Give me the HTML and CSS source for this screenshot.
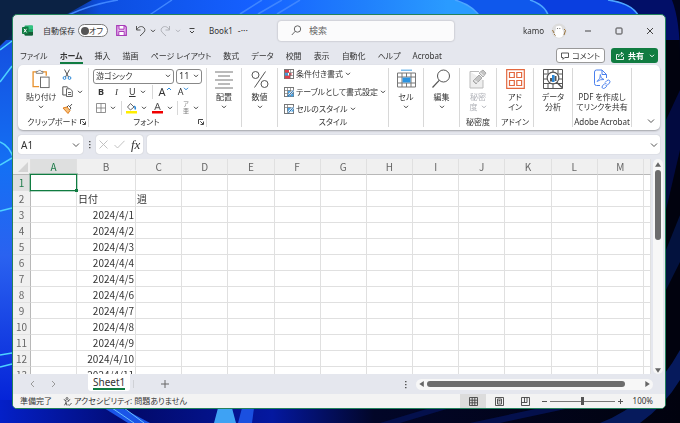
FILE: index.html
```html
<!DOCTYPE html>
<html lang="ja">
<head>
    <meta charset="UTF-8">
    <meta name="viewport" content="width=device-width, initial-scale=1.0">
    <title>Book1 - Excel</title>
    <link rel="stylesheet" href="styles.css">
</head>
<body>
    <!-- Shared icon shapes -->
    <svg class="defs" aria-hidden="true">
        <symbol id="chev" viewBox="0 0 6 4"><path d="M1 .8 3 2.8 5 .8" fill="none" stroke="currentColor"/></symbol>
        <symbol id="launch" viewBox="0 0 6 6"><path d="M.5 5V.5H5M2.3 2.3 5 5M5.5 2.5v3h-3" fill="none" stroke="currentColor" stroke-width=".9"/></symbol>
    </svg>

    <!-- Desktop wallpaper -->
    <svg class="wallpaper" viewBox="0 0 680 423" preserveAspectRatio="none" aria-hidden="true">
        <defs>
            <linearGradient id="sky" x1="0" y1="0" x2="1" y2="0">
                <stop offset="0" stop-color="#0b2244"/>
                <stop offset=".11" stop-color="#0b2f80"/>
                <stop offset=".18" stop-color="#0c4ee0"/>
                <stop offset=".45" stop-color="#1560ff"/>
                <stop offset=".65" stop-color="#2080fc"/>
                <stop offset=".8" stop-color="#2a9bff"/>
            </linearGradient>
            <linearGradient id="floor" x1="0" y1="0" x2="1" y2="0">
                <stop offset="0" stop-color="#0420c8"/>
                <stop offset=".2" stop-color="#020a6c"/>
                <stop offset=".4" stop-color="#0418a0"/>
                <stop offset=".55" stop-color="#020628"/>
                <stop offset="1" stop-color="#01020e"/>
            </linearGradient>
            <linearGradient id="side" x1="0" y1="0" x2="0" y2="1">
                <stop offset="0" stop-color="#1450e0"/>
                <stop offset=".35" stop-color="#1470f4"/>
                <stop offset=".6" stop-color="#2a62f0"/>
                <stop offset="1" stop-color="#0524d8"/>
            </linearGradient>
        </defs>
        <rect width="680" height="423" fill="#01020e"/>
        <rect y="380" width="680" height="43" fill="url(#floor)"/>
        <rect width="560" height="60" fill="url(#sky)"/>
        <path d="M0 40H40V400H0z" fill="url(#side)"/>
        <path d="M0 0H92L60 18 12 34 0 46z" fill="#0b2244"/>
        <path d="M455 0Q475 6 482 20H640V0z" fill="#0f58ec"/>
        <path d="M530 0Q548 6 549 20H680V0z" fill="#0a3fe0"/>
        <path d="M610 0Q636 4 640 20L664 40H680V0z" fill="#020f68"/>
        <path d="M672 0Q680 20 680 60V0z" fill="#01041e"/>
        <g fill="none" stroke="#3f86ff" stroke-width="1.5">
            <path d="M66 16Q92 4 118 0M148 16 172 0M240 14 262 0M258 14 282 0M277 14 300 0"/>
            <path d="M455 0Q475 6 482 20M530 0Q548 6 549 20M608 0Q636 4 640 20" stroke="#4da6ff"/>
            <path d="M0 50 12 41M0 82 12 66M0 165 12 158M0 211 12 208M0 142Q10 146 14 160M0 355 12 353M0 367 12 364" stroke="#4dd2ff"/>
        </g>
        <path d="M104 408 128 423H150L122 408z" fill="#1a55e8"/>
        <path d="M112 408 134 423M124 408 144 423" stroke="#6ac0ff" fill="none"/>
        <path d="M218 408 214 423H236L232 408z" fill="#3ea2f4"/>
        <path d="M242 408 238 423H252L254 408z" fill="#1a50e0"/>
        <path d="M380 423 430 408H450L400 423zM470 423 540 408H570L500 423z" fill="#04104c"/>
        <path d="M600 423Q650 404 680 350V380Q665 405 640 423z" fill="#061a5c"/>
        <path d="M666 120 680 90V150L666 210z" fill="#020a40"/>
        <path d="M666 250 680 215V262L666 290z" fill="#03123e"/>
    </svg>

    <div class="window">
        <!-- Title bar -->
        <div class="titlebar">
            <div class="quick">
                <svg class="logo" width="11" height="11" viewBox="0 0 11 11"><rect x="2.5" y=".5" width="8.5" height="10" rx="1" fill="#21a366"/><path d="M6.5.5H10a1 1 0 0 1 1 1V4H6.5z" fill="#33c481"/><path d="M2.5 7H11v2.500a1 1 0 0 1-1 1H3.500a1 1 0 0 1-1-1z" fill="#185c37"/><rect y="2" width="6.500" height="7" rx=".8" fill="#107c41"/><path d="M2 3.800 4.500 7.400M4.500 3.800 2 7.400" stroke="#fff"/></svg>
                <label class="autosave" for="autosave">自動保存</label>
                <label class="toggle"><input type="checkbox" id="autosave"><span>オフ</span></label>
                <button class="save" aria-label="上書き保存"><svg width="11" height="11" viewBox="0 0 11 11"><path d="M.7.7H8.800L10.300 2V10.300H.7z" fill="#e7b6ee" stroke="#a83cb8" stroke-width="1.200"/><path d="M3 1v3.200h5V1" fill="#fff" stroke="#a83cb8"/><path d="M2.800 10V6.500h5.400V10" fill="#fff" stroke="#a83cb8"/></svg></button>
                <button class="split" aria-label="元に戻す"><svg width="11" height="12" viewBox="0 0 11 12"><path d="M1.500 1v4h4M1.500 5C3.500 1.500 6 1 8 2s2.500 3.500 1 5.200L5 11" fill="none" stroke="#555"/></svg><svg class="chev"><use href="#chev"/></svg></button>
                <button class="split dim" aria-label="やり直し" disabled><svg width="11" height="12" viewBox="0 0 11 12"><path d="M9.500 1v4h-4M9.500 5C7.500 1.500 5 1 3 2S.5 5.500 2 7.200L6 11" fill="none" stroke="#b0b2b8"/></svg><svg class="chev"><use href="#chev"/></svg></button>
                <button class="customize" aria-label="クイック アクセス"><svg width="6" height="6" viewBox="0 0 6 6"><path d="M.5.5h5M1 3l2 2 2-2" fill="none" stroke="#444"/></svg></button>
                <span class="doc">Book1</span>
                <span class="dots">-···</span>
            </div>
            <label class="search">
                <svg width="11" height="11" viewBox="0 0 11 11"><circle cx="6.500" cy="4" r="3.200" fill="none" stroke="#666"/><path d="M4.200 6.300.8 10" stroke="#666"/></svg>
                <input type="search" placeholder="検索" aria-label="検索">
            </label>
            <div class="account">
                <span class="user">kamo</span>
                <svg class="avatar" width="16" height="16" viewBox="0 0 16 16"><circle cx="8" cy="8" r="7.500" fill="#dcdcdc"/><path d="M5 14Q3 9 5 6 4 3 7 3 11 2 11 6 14 9 11 14 8 15.500 5 14z" fill="#fff"/><path d="M1.500 7 3 10M13 6l1.500 1.500L13 12M3 11l1.500 1.500" stroke="#9a7440" fill="none"/><circle cx="6.500" cy="5.500" r=".6" fill="#666"/><circle cx="8.800" cy="5.500" r=".6" fill="#666"/></svg>
                <button aria-label="最小化"><svg width="8" height="8" viewBox="0 0 8 8"><path d="M1 4h6" stroke="#444"/></svg></button>
                <button aria-label="最大化"><svg width="8" height="8" viewBox="0 0 8 8"><rect x="1" y="1" width="6" height="6" rx=".8" fill="none" stroke="#444"/></svg></button>
                <button aria-label="閉じる"><svg width="8" height="8" viewBox="0 0 8 8"><path d="M1 1l6 6M7 1 1 7" stroke="#444"/></svg></button>
            </div>
        </div>

        <!-- Ribbon tabs -->
        <div class="tabs">
            <nav>
                <a href="#">ファイル</a>
                <a href="#" class="active">ホーム</a>
                <a href="#">挿入</a>
                <a href="#">描画</a>
                <a href="#">ページ レイアウト</a>
                <a href="#">数式</a>
                <a href="#">データ</a>
                <a href="#">校閲</a>
                <a href="#">表示</a>
                <a href="#">自動化</a>
                <a href="#">ヘルプ</a>
                <a href="#">Acrobat</a>
            </nav>
            <button class="comment"><svg width="8" height="8" viewBox="0 0 8 8"><path d="M.5 1h7v4.500H3.800L2 7.300V5.500H.5z" fill="none" stroke="#444" stroke-width=".9"/></svg>コメント</button>
            <button class="share"><svg width="8" height="9" viewBox="0 0 8 9"><path d="M2.500 3.500h-2v5h7V6M2.500 6C2.800 4 4 3 5.500 3V1.200L7.700 3.500 5.500 5.500V4.300" fill="none" stroke="#fff" stroke-width=".9"/></svg>共有<svg class="chev"><use href="#chev"/></svg></button>
        </div>

        <!-- Ribbon -->
        <div class="ribbon">
            <section class="group">
                <div class="clipboard">
                    <button class="big"><svg width="20" height="21" viewBox="0 0 20 21"><path d="M5 3H1.700v15.500H8M12 3h3.500v4" fill="none" stroke="#e8912d" stroke-width="1.400"/><path d="M5 4.500V2.500h2Q8.500-.5 10 2.500h2v2z" fill="#fff" stroke="#777"/><rect x="9.500" y="8.500" width="9" height="11" fill="#fff" stroke="#666"/></svg>貼り付け<svg class="chev"><use href="#chev"/></svg></button>
                    <div class="stack">
                        <button aria-label="切り取り"><svg width="10" height="11" viewBox="0 0 10 11"><path d="M2.500.5 6.500 8M7.500.5 3.500 8" stroke="#555" fill="none"/><circle cx="2.500" cy="9" r="1.400" fill="none" stroke="#2b88d8"/><circle cx="7.500" cy="9" r="1.400" fill="none" stroke="#2b88d8"/></svg></button>
                        <button class="split" aria-label="コピー"><svg width="11" height="11" viewBox="0 0 11 11"><path d="M4 9H.8V.8H5L6.500 2" fill="none" stroke="#555"/><path d="M4.500 2.800h3.700L10.300 5v5.500H4.500zM6 6.500h3M6 8.500h3" fill="#fff" stroke="#555" stroke-width=".9"/></svg><svg class="chev"><use href="#chev"/></svg></button>
                        <button aria-label="書式のコピー"><svg width="11" height="11" viewBox="0 0 11 11"><path d="M1 5 5 4 8 7.500 6 10.500z" fill="#f6c07c" stroke="#e07b1a"/><path d="M5 4 6.500 2.500 9 5 7.500 6.800M7.800 3.500 10 1" fill="none" stroke="#555"/></svg></button>
                    </div>
                </div>
                <div class="foot">クリップボード<button aria-label="詳細"><svg class="launch"><use href="#launch"/></svg></button></div>
            </section>

            <section class="group">
                <div class="font">
                    <div class="row fields">
                        <span class="select name"><select aria-label="フォント"><option>游ゴシック</option></select><svg class="chev"><use href="#chev"/></svg></span>
                        <span class="select size"><select aria-label="サイズ"><option>11</option></select><svg class="chev"><use href="#chev"/></svg></span>
                    </div>
                    <div class="row letters">
                        <button class="bold">B</button>
                        <button class="italic">I</button>
                        <button class="split"><u>U</u><svg class="chev"><use href="#chev"/></svg></button>
                        <i class="rule"></i>
                        <button class="grow">A<svg class="chev"><path d="M1 3 3 1l2 2" fill="none" stroke="#2b88d8"/></svg></button>
                        <button class="shrink">A<svg class="chev blue"><use href="#chev"/></svg></button>
                    </div>
                    <div class="row">
                        <button class="split" aria-label="罫線"><svg width="10" height="10" viewBox="0 0 10 10"><path d="M.5.500h9v9h-9zM5 .5v9M.5 5h9" fill="none" stroke="#777" stroke-width=".8"/></svg><svg class="chev"><use href="#chev"/></svg></button>
                        <i class="rule"></i>
                        <button class="split" aria-label="塗りつぶし"><svg width="11" height="12" viewBox="0 0 11 12"><path d="M4.500 1.500 8 5 4.500 8 1.500 5z" fill="#fff" stroke="#666"/><path d="M8.200 4Q10 5.500 9 7.500" stroke="#2b88d8" stroke-width="1.500" fill="none"/><path d="M0 9h11v2.500H0z" fill="#ffee00"/></svg><svg class="chev"><use href="#chev"/></svg></button>
                        <button class="split" aria-label="フォントの色"><svg width="11" height="12" viewBox="0 0 11 12"><path d="M2.700 8 5.500 1 8.300 8M3.700 5.700h3.600" fill="none" stroke="#555"/><path d="M0 9h11v2.500H0z" fill="#f00000"/></svg><svg class="chev"><use href="#chev"/></svg></button>
                        <i class="rule"></i>
                        <button class="split ruby"><span>ア<br>亜</span><svg class="chev"><use href="#chev"/></svg></button>
                    </div>
                </div>
                <div class="foot">フォント<button aria-label="詳細"><svg class="launch"><use href="#launch"/></svg></button></div>
            </section>

            <section class="group">
                <button class="big"><svg width="18" height="19" viewBox="0 0 18 19"><path d="M0 2.500h18M3 6.500h12M0 10.500h18M3 14.500h12M0 18.500h18" stroke="#777"/></svg>配置<svg class="chev"><use href="#chev"/></svg></button>
            </section>

            <section class="group">
                <button class="big"><svg width="18" height="19" viewBox="0 0 18 19"><circle cx="4.500" cy="5.500" r="3.500" fill="none" stroke="#555"/><circle cx="13.500" cy="14.500" r="3.500" fill="none" stroke="#555"/><path d="M14.500 2 3.500 18" stroke="#555"/></svg>数値<svg class="chev"><use href="#chev"/></svg></button>
            </section>

            <section class="group">
                <div class="styles">
                    <button><svg width="10" height="10" viewBox="0 0 10 10"><rect x=".5" y=".5" width="9" height="9" fill="#fff" stroke="#777"/><path d="M1 1h4v3H1zM5 4h2.500v3H5zM1 7h5v2.500H1z" fill="#e0404c"/><path d="M1 4h3v3H1z" fill="#4a98dc"/><path d="M.5 3.500h9M.5 6.500h9M6.500.5v9" stroke="#777" stroke-width=".6"/></svg>条件付き書式<svg class="chev"><use href="#chev"/></svg></button>
                    <button><svg width="10" height="10" viewBox="0 0 10 10"><rect x=".5" y=".5" width="9" height="9" fill="#fff" stroke="#777"/><path d="M4 3.500h5.500v6H3z" fill="#4aa3e6"/><path d="M.5 3.500h9M.5 6.500h9M3.500.5v9M6.500.5v9" stroke="#777" stroke-width=".7"/><path d="M9.500 3 5 8" stroke="#fff" stroke-width="2"/><path d="M9.500 3 4 9.500" stroke="#2268a8"/></svg>テーブルとして書式設定<svg class="chev"><use href="#chev"/></svg></button>
                    <button><svg width="10" height="10" viewBox="0 0 10 10"><rect x=".5" y=".5" width="9" height="9" fill="#fff" stroke="#777"/><path d="M3 3.500h6.500v4H3z" fill="#4aa3e6"/><path d="M.5 3.500h9M3.500.5v9" stroke="#777" stroke-width=".7"/><path d="M9.500 3 5 8" stroke="#fff" stroke-width="2"/><path d="M9.500 3 4 9.500" stroke="#2268a8"/></svg>セルのスタイル<svg class="chev"><use href="#chev"/></svg></button>
                </div>
                <div class="foot">スタイル</div>
            </section>

            <section class="group">
                <button class="big"><svg width="19" height="19" viewBox="0 0 19 19"><path d="M4 0h11v1.500H4z" fill="#7cbcec"/><path d="M.5 3.500h18v14H.5zM.5 7.500h18M.5 13.500h18M5 3.500v14M14 3.500v14M9.500 3.500v4M9.500 13.500v4" fill="none" stroke="#777"/><path d="M5.500 8h8v5h-8z" fill="#2b93e0"/></svg>セル<svg class="chev"><use href="#chev"/></svg></button>
            </section>

            <section class="group">
                <button class="big"><svg width="19" height="20" viewBox="0 0 19 20"><circle cx="11.500" cy="7" r="6" fill="none" stroke="#555"/><path d="M7.200 11.300.5 18.500" stroke="#555" stroke-width="1.200"/></svg>編集<svg class="chev"><use href="#chev"/></svg></button>
            </section>

            <section class="group">
                <button class="big dim" disabled><svg width="18" height="20" viewBox="0 0 18 20"><path d="M1 2.500h9M14 11v8H1V2.500" fill="#eee" stroke="#bbb"/><path d="M4 12 10 6l3 3-6 6zM10 4l4-3 3 3-3 4z" fill="#c4c4c4" stroke="#aaa"/><path d="M5.500 11.500l3 2M11 3.500l3.500 3.500" stroke="#fff"/></svg>秘密<span>度<svg class="chev"><use href="#chev"/></svg></span></button>
                <div class="foot">秘密度</div>
            </section>

            <section class="group">
                <button class="big"><svg width="19" height="20" viewBox="0 0 19 20"><path d="M.7.7h17.600v18.600H.7zM3.500 3.500h4.800v5H3.500zM10.800 3.500h4.800v5h-4.800zM3.500 11.500h4.800v5H3.500zM10.800 11.500h4.800v5h-4.800z" fill="none" stroke="#e3683f" stroke-width="1.200"/></svg>アド<span>イン</span></button>
                <div class="foot">アドイン</div>
            </section>

            <section class="group">
                <button class="big"><svg width="20" height="20" viewBox="0 0 20 20"><path d="M.5.500h19v19H.5zM.5 5h19M.5 10h5M.5 14.500h19M5 .5v4M10 .5v4M15 .5v4M5 15v4M10 15v4M15 10h4.500" fill="#fff" stroke="#555"/><circle cx="10" cy="9" r="5.800" fill="#fff" stroke="#555" stroke-width="1.200"/><path d="M7 9h2v3.500H7zM11.500 7h2v5h-2z" fill="#555"/><path d="M9 6h2.500v7H9z" fill="#2b88d8"/><path d="M14 13.500l5 5" stroke="#555" stroke-width="1.500"/></svg>データ<span>分析</span></button>
            </section>

            <section class="group">
                <button class="big"><svg width="18" height="20" viewBox="0 0 18 20"><path d="M7 16.500H3.500Q1.500 16.500 1.500 14.500V3Q1.500 1 3.500 1H9l4.500 4.500V9M9 1v4.500h4.500" fill="none" stroke="#4a80ee"/><path d="M4 12.500Q8 9.500 7.300 5.500 7.500 10 11 10.500 7.500 10 4 12.500" fill="none" stroke="#4a80ee" stroke-width=".9"/><path d="M12 13.500l2-2q1.500-1 2.500 0t0 2.500l-2 2q-1 .8-2 .2M13.500 14.800q-1-.8-2 0l-2 2q-1 1.500 0 2.300t2.300 0l2-2" fill="none" stroke="#4a80ee"/></svg>PDF を作成し<span>てリンクを共有</span></button>
                <div class="foot">Adobe Acrobat</div>
            </section>

            <button class="collapse" aria-label="リボンの表示"><svg width="8" height="6" viewBox="0 0 8 6"><path d="M1 1.500l3 3 3-3" fill="none" stroke="#555"/></svg></button>
        </div>

        <!-- Formula bar -->
        <div class="formula">
            <span class="namebox"><input type="text" value="A1" aria-label="名前ボックス"><svg width="8" height="6" viewBox="0 0 8 6"><path d="M1 1.500l3 3 3-3" fill="none" stroke="#555"/></svg></span>
            <svg width="3" height="9" viewBox="0 0 3 9"><path d="M1 1h1.500v1.300H1zM1 4h1.500v1.300H1zM1 7h1.500v1.300H1z" fill="#555"/></svg>
            <span class="actions">
                <button aria-label="キャンセル"><svg width="9" height="9" viewBox="0 0 9 9"><path d="M.5.5l8 8M8.500.5l-8 8" stroke="#bbb" stroke-width=".9"/></svg></button>
                <button aria-label="入力"><svg width="11" height="9" viewBox="0 0 11 9"><path d="M.5 5 3.500 8 10.500.8" fill="none" stroke="#bbb" stroke-width=".9"/></svg></button>
                <button class="fx">fx</button>
            </span>
            <span class="entry"><input type="text" aria-label="数式バー"><svg width="8" height="6" viewBox="0 0 8 6"><path d="M1 1.500l3 3 3-3" fill="none" stroke="#555"/></svg></span>
        </div>

        <!-- Sheet -->
        <div class="sheet">
            <div class="cells">
                <table id="grid"></table>
            </div>
            <div class="vscroll">
                <svg width="6" height="5" viewBox="0 0 6 5"><path d="M3 .3 6 4.800H0z" fill="#666"/></svg>
                <div class="track"><div class="thumb"></div></div>
                <svg width="6" height="5" viewBox="0 0 6 5"><path d="M3 4.800 6 .3H0z" fill="#666"/></svg>
            </div>
        </div>

        <!-- Sheet tabs -->
        <div class="sheetbar">
            <button class="step" aria-label="前のシート"><svg width="5" height="8" viewBox="0 0 5 8"><path d="M4 1 1 4l3 3" fill="none" stroke="#999"/></svg></button>
            <button class="step" aria-label="次のシート"><svg width="5" height="8" viewBox="0 0 5 8"><path d="M1 1l3 3-3 3" fill="none" stroke="#999"/></svg></button>
            <button class="sheettab"><span>Sheet1</span></button>
            <button class="add" aria-label="新しいシート"><svg width="8" height="8" viewBox="0 0 8 8"><path d="M4 0v8M0 4h8" stroke="#666"/></svg></button>
            <svg class="grip" width="3" height="9" viewBox="0 0 3 9"><path d="M1 1h1.500v1.300H1zM1 4h1.500v1.300H1zM1 7h1.500v1.300H1z" fill="#555"/></svg>
            <div class="hscroll">
                <svg width="5" height="6" viewBox="0 0 5 6"><path d="M.3 3 4.800 0v6z" fill="#666"/></svg>
                <div class="track"><div class="thumb"></div></div>
                <svg width="5" height="6" viewBox="0 0 5 6"><path d="M4.800 3 .3 0v6z" fill="#666"/></svg>
            </div>
        </div>

        <!-- Status bar -->
        <div class="status">
            <span class="ready">準備完了</span>
            <svg width="9" height="9" viewBox="0 0 9 9"><circle cx="4" cy="1.500" r="1" fill="none" stroke="#444" stroke-width=".8"/><path d="M.8 2.500 3 3.700V5.500L1.500 8.300M7.200 2.500 5 3.700V5M3 5.500 4 8.500M5 7.300l1.200 1.200L8.600 6" fill="none" stroke="#444" stroke-width=".9"/></svg>
            <span class="access">アクセシビリティ: 問題ありません</span>
            <div class="views">
                <button class="on" aria-label="標準"><svg width="9" height="9" viewBox="0 0 9 9"><path d="M.5.500h8v8h-8zM3.200.5v8M5.800.5v8M.5 3.200h8M.5 5.800h8" fill="none" stroke="#444" stroke-width=".9"/></svg></button>
                <button aria-label="ページ レイアウト"><svg width="9" height="9" viewBox="0 0 9 9"><path d="M.5.500h8v8h-8zM2.500 2h4v5h-4zM3.500 3.500h2M3.500 5h2" fill="none" stroke="#444" stroke-width=".9"/></svg></button>
                <button aria-label="改ページ プレビュー"><svg width="9" height="9" viewBox="0 0 9 9"><path d="M.5.500h8v8h-8zM.5 5.500h5.500v-5M3.500.5v5" fill="none" stroke="#444" stroke-width=".9"/></svg></button>
            </div>
            <button class="zoomstep" aria-label="縮小"><svg width="5" height="5" viewBox="0 0 5 5"><path d="M0 2.500h5" stroke="#555"/></svg></button>
            <input type="range" min="0" max="100" value="50" aria-label="ズーム">
            <button class="zoomstep" aria-label="拡大"><svg width="5" height="5" viewBox="0 0 5 5"><path d="M0 2.500h5M2.500 0v5" stroke="#555"/></svg></button>
            <span class="percent">100%</span>
        </div>
    </div>
    <script src="script.js"></script>
</body>
</html>
```
FILE: styles.css
```css
* {
    box-sizing: border-box;
}
body {
    margin: 0;
    height: 100vh;
    padding: 14px 14px 14px 12px;
    overflow: hidden;
    font-family: "Noto Sans", "Noto Sans CJK JP", sans-serif;
    font-feature-settings: "palt";
    font-size: 9px;
    line-height: 12px;
    color: #333;
}
button, input, select {
    font: inherit;
    font-feature-settings: inherit;
    color: inherit;
    border: 0;
    padding: 0;
    margin: 0;
    background: none;
    outline: 0;
    min-width: 0;
}
button {
    display: flex;
    align-items: center;
    white-space: nowrap;
}
svg {
    flex: none;
    display: block;
}
.defs {
    position: absolute;
    width: 0;
    height: 0;
}
.wallpaper {
    position: fixed;
    inset: 0;
    width: 100%;
    height: 100%;
    z-index: -1;
}
.chev {
    width: 6px;
    height: 4px;
    color: #444;
}
.launch {
    width: 6px;
    height: 6px;
}
.split {
    gap: 4px;
}
.window {
    display: flex;
    flex-direction: column;
    height: 100%;
    border: 1px solid #23825c;
    border-radius: 5px;
    overflow: hidden;
    background: #e5e7ee;
}

/* Title bar */
.titlebar {
    display: flex;
    align-items: center;
    height: 31px;
}
.quick {
    display: flex;
    align-items: center;
    width: 265px;
    padding-left: 9px;
    white-space: nowrap;
}
.autosave {
    margin-left: 10px;
    font-size: 8px;
}
.toggle {
    display: flex;
    align-items: center;
    justify-content: space-between;
    width: 30px;
    height: 13px;
    margin-left: 3px;
    padding: 0 4px 0 2px;
    border: 1px solid #777;
    border-radius: 7px;
    background: #fff;
    font-size: 8px;
}
.toggle input {
    appearance: none;
    width: 8px;
    height: 8px;
    border-radius: 50%;
    background: #555;
}
.save {
    margin: 0 8px;
}
.dim .chev, .dim {
    color: #b0b2b8;
}
.quick .dim {
    margin-left: 4px;
}
.customize {
    margin: 0 14px 0 8px;
}
.doc {
    font-size: 8px;
}
.dots {
    margin-left: 5px;
}
.search {
    display: flex;
    align-items: center;
    gap: 7px;
    width: 27%;
    height: 20px;
    padding-left: 13px;
    border-radius: 3px;
    background: #fbfbfc;
    box-shadow: 0 0 2px rgba(0, 0, 0, 0.3);
}
.search input {
    width: 100%;
}
.search input::placeholder {
    color: #666;
    opacity: 1;
}
.account {
    display: flex;
    align-items: center;
    margin-left: auto;
    padding-right: 11px;
    gap: 23px;
}
.user {
    margin-right: -16px;
    font-size: 8px;
}
.avatar {
    margin-right: -6px;
}

/* Ribbon tabs */
.tabs {
    display: flex;
    align-items: center;
    height: 19px;
    padding: 0 7px;
}
.tabs nav {
    display: flex;
    gap: 12px;
    flex: 1;
    padding-top: 3px;
    font-size: 8px;
    white-space: nowrap;
}
.tabs a {
    color: inherit;
    text-decoration: none;
    border-bottom: 2px solid transparent;
}
.tabs .active {
    font-weight: bold;
    border-bottom-color: #107c41;
}
.comment, .share {
    height: 15px;
    border-radius: 3px;
    gap: 3px;
    padding: 0 4px;
    font-size: 8px;
}
.comment {
    background: #fff;
    border: 1px solid #999;
}
.share {
    margin-left: 6px;
    padding: 0 3px 0 5px;
    gap: 4px;
    background: #107c41;
    color: #fff;
    font-weight: bold;
}
.share .chev {
    margin-left: 1px;
    color: #fff;
}

/* Ribbon */
.ribbon {
    display: grid;
    grid-template-columns: 71px 118px 35px 36px 111px 35px 36px 37px 37px 39px 59px 1fr;
    height: 65px;
    margin: 0 5px;
    padding: 3px 0;
    border-radius: 5px;
    background: #fff;
    box-shadow: 0 1px 2px rgba(0, 0, 0, 0.3);
    font-size: 8px;
    line-height: 10px;
}
.group {
    display: flex;
    flex-direction: column;
    justify-content: space-between;
    border-right: 1px solid #d8d8d8;
}
.big {
    flex-direction: column;
    line-height: 10px;
    padding-top: 1px;
    align-self: center;
}
.big > svg:first-child {
    height: 20px;
    margin-bottom: 3px;
}
.big > .chev {
    margin-top: 3px;
}
.big span {
    display: flex;
    align-items: center;
    gap: 3px;
}
.foot {
    display: flex;
    justify-content: center;
    white-space: nowrap;
}
.foot button {
    margin-left: auto;
    padding-right: 2px;
}
.foot:has(button)::before {
    content: "";
    width: 6px;
    margin-right: auto;
}
.clipboard {
    display: flex;
    gap: 6px;
    padding-left: 8px;
}
.clipboard .big {
    align-self: flex-start;
}
.stack, .styles {
    display: flex;
    flex-direction: column;
    justify-content: space-between;
    height: 46px;
    padding-top: 1px;
}
.font {
    display: flex;
    flex-direction: column;
    padding: 0 4px;
}
.row {
    display: flex;
    align-items: center;
    justify-content: space-between;
    height: 16px;
    padding: 0 3px;
}
.fields {
    padding: 0;
    gap: 2px;
}
.select {
    display: flex;
    align-items: center;
    height: 15px;
    padding-right: 2px;
    border: 1px solid #888;
    border-radius: 3px;
}
.select select {
    appearance: none;
    flex: 1;
    padding-left: 2px;
}
.name {
    flex: 1;
}
.size {
    width: 26px;
    font-size: 9px;
}
.rule {
    width: 1px;
    height: 14px;
    background: #d8d8d8;
}
.letters {
    justify-content: flex-start;
    gap: 6px;
    padding-left: 5px;
    font-size: 9px;
}
.bold, .italic {
    margin-right: 5px;
}
.bold {
    font-weight: bold;
}
.italic {
    font-family: "Liberation Serif", serif;
    font-style: italic;
}
.grow, .shrink {
    align-items: flex-start;
}
.grow {
    font-size: 11px;
}
.blue {
    color: #2b88d8;
}
.ruby {
    font-size: 6px;
    line-height: 7px;
    color: #888;
}
.styles {
    padding-left: 6px;
}
.styles button {
    gap: 2px;
}
.collapse {
    align-self: end;
    justify-self: end;
    padding: 0 5px 3px 0;
}

/* Formula bar */
.formula {
    display: flex;
    align-items: center;
    gap: 5px;
    height: 19px;
    margin: 5px 5px;
}
.namebox, .actions, .entry {
    display: flex;
    align-items: center;
    height: 100%;
    border-radius: 3px;
    background: #fff;
    box-shadow: 0 0 1px rgba(0, 0, 0, 0.3);
}
.namebox {
    width: 65px;
    padding: 0 3px;
    font-size: 10px;
}
.namebox input, .entry input {
    flex: 1;
    width: 0;
}
.actions {
    gap: 6px;
    padding: 0 3px;
    margin-right: -1px;
}
.fx {
    font-family: "Liberation Serif", serif;
    font-style: italic;
    font-size: 13px;
}
.entry {
    flex: 1;
    padding: 0 2px;
}

/* Sheet */
.sheet {
    display: flex;
    flex: 1;
    min-height: 0;
}
.cells {
    flex: 1;
    overflow: hidden;
    background: #fff;
}
.cells table {
    width: 100%;
    table-layout: fixed;
    border-collapse: separate;
    border-spacing: 0;
    font-family: "Noto Sans CJK JP", sans-serif;
    font-size: 10px;
    line-height: 15px;
}
.corner {
    width: 18px;
}
.col-a {
    width: 46px;
}
.col-b {
    width: 59px;
}
.rest {
    width: 7px;
}
.cells th, .cells td {
    height: 16px;
    padding: 0 1px;
    border-right: 1px solid #e0e0e0;
    border-bottom: 1px solid #e0e0e0;
    white-space: nowrap;
    text-align: left;
}
.cells th {
    background: #f0f0f0;
    color: #666;
    font-weight: normal;
    text-align: center;
}
.cells thead th {
    border-bottom-color: #b8b8b8;
}
.cells tbody th {
    border-right-color: #b8b8b8;
}
.cells .current {
    background: #dedfdf;
    color: #1c7a48;
}
.cells .date {
    text-align: right;
}
.cells .selected {
    position: relative;
}
.selected::before {
    content: "";
    position: absolute;
    inset: -1px;
    border: 1px solid #107c41;
    outline: 1px solid rgba(16, 124, 65, 0.3);
}
.selected::after {
    content: "";
    position: absolute;
    right: -2px;
    bottom: -2px;
    width: 3px;
    height: 3px;
    background: #107c41;
}
.all {
    display: block;
    margin-left: auto;
}
.vscroll {
    display: flex;
    flex-direction: column;
    align-items: center;
    gap: 3px;
    width: 10px;
    margin: 0 2px;
    padding: 3px 0 1px;
    border-radius: 5px;
    background: #f7f7f7;
}
.vscroll .track {
    flex: 1;
    width: 6px;
}
.vscroll .thumb {
    height: 36%;
}
.thumb {
    height: 100%;
    border-radius: 3px;
    background: #6c6c6c;
}

/* Sheet tabs */
.sheetbar {
    display: flex;
    align-items: center;
    height: 20px;
    padding: 0 12px 0 17px;
}
.step {
    margin-right: 16px;
}
.sheettab {
    align-self: flex-start;
    height: 17px;
    margin-left: 16px;
    padding: 0 5px;
    border-radius: 0 0 3px 3px;
    background: #fff;
    font-size: 10px;
}
.sheettab span {
    border-bottom: 2px solid #107c41;
}
.add {
    padding-left: 27px;
    margin-left: 3px;
    border-left: 1px solid #cfd1d6;
}
.grip {
    margin-left: auto;
}
.hscroll {
    display: flex;
    align-items: center;
    gap: 3px;
    width: 38%;
    height: 11px;
    margin-left: 9px;
    padding: 0 3px;
    border-radius: 6px;
    background: #f7f7f7;
}
.hscroll .track {
    flex: 1;
    height: 6px;
}
.hscroll .thumb {
    width: 92%;
}

/* Status bar */
.status {
    display: flex;
    align-items: center;
    height: 14px;
    padding: 0 12px 0 7px;
    background: #f3f3f3;
    font-size: 8px;
}
.ready {
    margin-right: 11px;
}
.access {
    margin-left: 2px;
}
.views {
    display: flex;
    align-self: stretch;
    margin-left: auto;
    margin-right: 4px;
}
.views button {
    width: 26px;
    justify-content: center;
}
.views .on {
    background: #dcdcdc;
}
.status input {
    appearance: none;
    width: 65px;
    height: 8px;
    margin: 0 3px;
    background: linear-gradient(#777, #777) center / 100% 1px no-repeat;
}
.status input::-webkit-slider-thumb {
    appearance: none;
    width: 3px;
    height: 8px;
    background: #555;
}
.percent {
    width: 22px;
    margin-left: 8px;
    text-align: right;
}
```
FILE: script.js
```javascript
const columns = ['A', 'B', 'C', 'D', 'E', 'F', 'G', 'H', 'I', 'J', 'K', 'L', 'M', ''];
const rowCount = 13;

// Text of one cell: headings in row 2, dates from row 3 on
function cellText(row, column) {
    if (row === 2 && column === 'B') return '日付';
    if (row === 2 && column === 'C') return '週';
    if (row > 2 && column === 'B') {
        const day = new Date(2024, 3, row - 2);
        return day.getFullYear() + '/' + (day.getMonth() + 1) + '/' + day.getDate();
    }
    return '';
}

function cellClass(row, column) {
    if (row === 1 && column === 'A') return 'selected';
    if (row > 2 && column === 'B') return 'date';
    return '';
}

const widths = { A: 'col-a', B: 'col-b', '': 'rest' };
let html = '<thead><tr><th class="corner"><svg class="all" width="12" height="12" viewBox="0 0 12 12"><path d="M11 1v10H1z" fill="#d4d4d4"/></svg></th>';
columns.forEach(function(column) {
    const current = column === 'A' ? ' current' : '';
    html += '<th class="' + (widths[column] || '') + current + '">' + column + '</th>';
});
html += '</tr></thead><tbody>';
for (let row = 1; row <= rowCount; row++) {
    html += '<tr><th' + (row === 1 ? ' class="current"' : '') + '>' + row + '</th>';
    columns.forEach(function(column) {
        html += '<td class="' + cellClass(row, column) + '">' + cellText(row, column) + '</td>';
    });
    html += '</tr>';
}
document.getElementById('grid').innerHTML = html + '</tbody>';
```
